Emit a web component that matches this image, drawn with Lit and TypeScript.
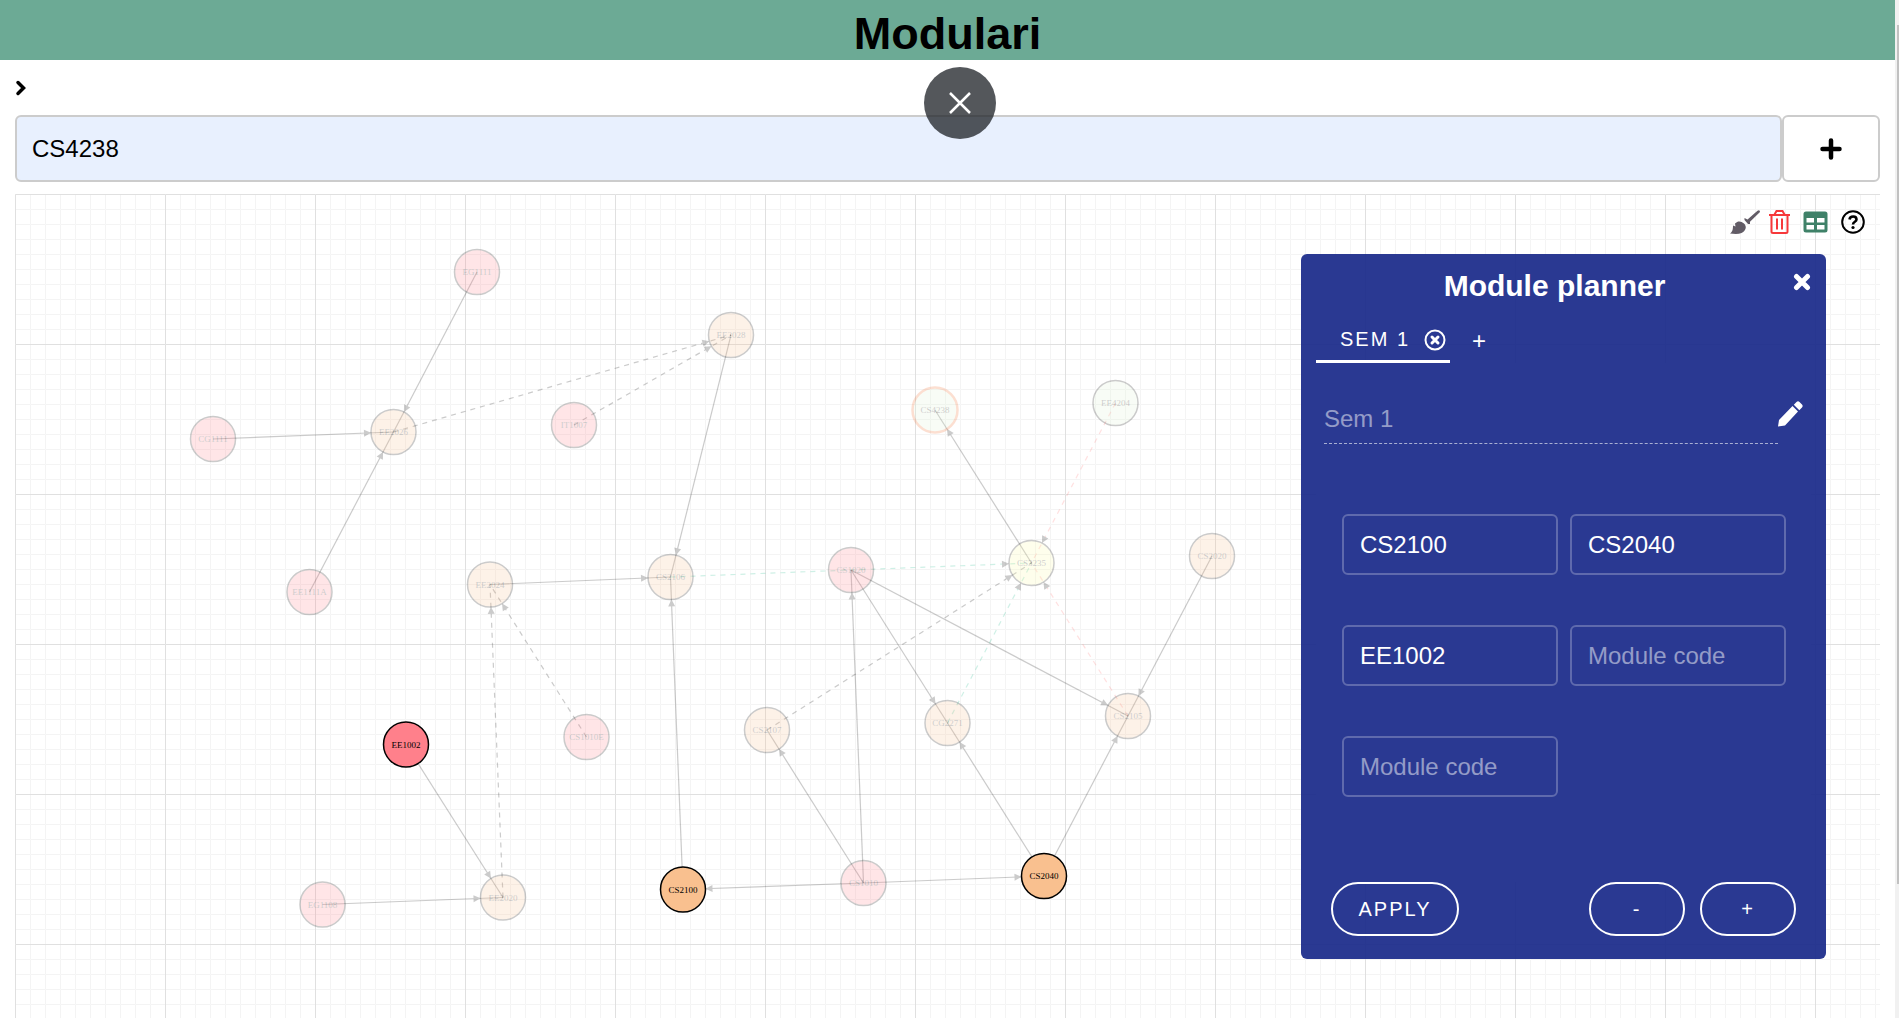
import { LitElement, html, svg, css } from "lit";
import { customElement, state } from "lit/decorators.js";

type Tone = "rose" | "peach" | "lemon" | "mint";
interface ModuleNode { id: string; x: number; y: number; tone: Tone; planned?: boolean; searched?: boolean }
interface Link { from: string; to: string; kind?: "dash" | "green" | "red" }

const NODES: ModuleNode[] = [
  { id: "EG1111", x: 477, y: 272, tone: "rose" },
  { id: "EE2028", x: 731, y: 335, tone: "peach" },
  { id: "CG1111", x: 213, y: 439, tone: "rose" },
  { id: "EE2026", x: 393.5, y: 432, tone: "peach" },
  { id: "IT1007", x: 574, y: 425, tone: "rose" },
  { id: "CS4238", x: 935, y: 410, tone: "mint", searched: true },
  { id: "EE4204", x: 1115.5, y: 403, tone: "mint" },
  { id: "EE1111A", x: 309.5, y: 592, tone: "rose" },
  { id: "EE2024", x: 490, y: 584.5, tone: "peach" },
  { id: "CS2106", x: 670.5, y: 577, tone: "peach" },
  { id: "CS1020", x: 851, y: 570, tone: "rose" },
  { id: "CS3235", x: 1031.5, y: 563, tone: "lemon" },
  { id: "CS2020", x: 1212, y: 556, tone: "peach" },
  { id: "EE1002", x: 406, y: 744.5, tone: "rose", planned: true },
  { id: "CS1010E", x: 586.5, y: 737, tone: "rose" },
  { id: "CS2107", x: 767, y: 730, tone: "peach" },
  { id: "CG2271", x: 947.5, y: 723, tone: "peach" },
  { id: "CS2105", x: 1128, y: 716, tone: "peach" },
  { id: "EG1108", x: 322.5, y: 904.5, tone: "rose" },
  { id: "EE2020", x: 503, y: 897.5, tone: "peach" },
  { id: "CS2100", x: 683, y: 889.5, tone: "peach", planned: true },
  { id: "CS1010", x: 863.5, y: 883, tone: "rose" },
  { id: "CS2040", x: 1044, y: 876, tone: "peach", planned: true },
];

const LINKS: Link[] = [
  { from: "EG1111", to: "EE2026" },
  { from: "CG1111", to: "EE2026" },
  { from: "EE1111A", to: "EE2026" },
  { from: "EE2026", to: "EE2028", kind: "dash" },
  { from: "IT1007", to: "EE2028", kind: "dash" },
  { from: "EE2028", to: "CS2106" },
  { from: "EE2024", to: "CS2106" },
  { from: "CS2100", to: "CS2106" },
  { from: "CS2106", to: "CS3235", kind: "green" },
  { from: "CS1010E", to: "EE2024", kind: "dash" },
  { from: "EE2020", to: "EE2024", kind: "dash" },
  { from: "EE1002", to: "EE2020" },
  { from: "EG1108", to: "EE2020" },
  { from: "CS1010", to: "CS2100" },
  { from: "CS1010", to: "CS2107" },
  { from: "CS1010", to: "CS1020" },
  { from: "CS1010", to: "CS2040" },
  { from: "CS1020", to: "CG2271" },
  { from: "CS1020", to: "CS2105" },
  { from: "CS2020", to: "CS2105" },
  { from: "CS2040", to: "CG2271" },
  { from: "CS2040", to: "CS2105" },
  { from: "CS3235", to: "CS4238" },
  { from: "CS2107", to: "CS3235", kind: "dash" },
  { from: "CG2271", to: "CS3235", kind: "green" },
  { from: "CS2105", to: "CS3235", kind: "red" },
  { from: "EE4204", to: "CS3235", kind: "red" },
];

const RADIUS = 22.5;

@customElement("module-graph")
export class ModuleGraph extends LitElement {
  static styles = css`
    :host { display: block; overflow: hidden; }
    .graph { display: block; width: 100%; height: 100%; }
    .minor { stroke: #f4f4f4; fill: none; }
    .major { stroke: #e0e0e0; fill: none; }
    .line { stroke: #000; stroke-width: 1.2; }
    .link { opacity: 0.2; }
    .dash, .green, .red { stroke-dasharray: 5 5; }
    .green { stroke: #12b886; }
    .red { stroke: #ff6b6b; }
    .node { opacity: 0.2; }
    .node.planned { opacity: 1; }
    .disc { stroke: #000; stroke-width: 1.5; }
    .rose { fill: #ff808b; }
    .peach { fill: #f9c08f; }
    .lemon { fill: #fdfba6; }
    .mint { fill: #e0f4d4; }
    .searched { stroke: #f2621f; stroke-width: 2.5; }
    .label { font: 9px "Liberation Serif", serif; text-anchor: middle; }
  `;

  private link(l: Link) {
    const a = NODES.find((n) => n.id === l.from)!;
    const b = NODES.find((n) => n.id === l.to)!;
    const dx = b.x - a.x;
    const dy = b.y - a.y;
    const len = Math.hypot(dx, dy);
    const angle = (Math.atan2(dy, dx) * 180) / Math.PI;
    return svg`<g class="link" transform="translate(${a.x} ${a.y}) rotate(${angle})">
      <line class="line ${l.kind ?? ""}" x1="0" y1="0" x2=${len} y2="0"></line>
      <path d="M${len - RADIUS} 0l-7 -3.5v7z"></path>
    </g>`;
  }

  private node(n: ModuleNode) {
    return svg`<g class="node ${n.planned ? "planned" : ""}">
      <circle class="disc ${n.tone} ${n.searched ? "searched" : ""}" cx=${n.x} cy=${n.y} r=${RADIUS}></circle>
      <text class="label" x=${n.x} y=${n.y + 3}>${n.id}</text>
    </g>`;
  }

  render() {
    return html`<svg class="graph" role="img" aria-label="Module prerequisites">
      <defs>
        <pattern id="small" width="15" height="15" patternUnits="userSpaceOnUse">
          <path class="minor" d="M0.5 15V0.5H15"></path>
        </pattern>
        <pattern id="large" width="150" height="150" patternUnits="userSpaceOnUse">
          <rect width="150" height="150" fill="url(#small)"></rect>
          <path class="major" d="M0.5 150V0.5H150"></path>
        </pattern>
      </defs>
      <rect width="100%" height="100%" fill="url(#large)"></rect>
      <g transform="translate(-15 -194)">
        <g>${LINKS.map((l) => this.link(l))}</g>
        <g>${NODES.map((n) => this.node(n))}</g>
      </g>
    </svg>`;
  }
}

@customElement("module-planner")
export class ModulePlanner extends LitElement {
  static styles = css`
    :host {
      display: flex; flex-direction: column; box-sizing: border-box;
      width: 525px; border-radius: 6px; padding: 13px 15px 23px;
      background: rgba(26, 42, 138, 0.93); color: #fff;
      font-family: "Liberation Sans", Arial, sans-serif;
    }
    button { font: inherit; letter-spacing: inherit; color: inherit; background: none; border: 0; padding: 0; cursor: pointer; }
    input { font: inherit; color: inherit; background: none; box-sizing: border-box; min-width: 0; outline: 0; }
    input::placeholder { color: rgba(255, 255, 255, 0.5); opacity: 1; }
    svg { display: block; fill: currentColor; }
    .head { display: grid; grid-template-columns: 1fr 18px; align-items: start; }
    .title { margin: 0; font-size: 30px; line-height: 38px; text-align: center; font-weight: 700; }
    .close { margin-top: 6px; }
    .tabs { display: flex; align-items: stretch; height: 50px; margin-top: 8px; }
    .tab { display: flex; align-items: center; gap: 14px; box-sizing: border-box; width: 134px; padding: 9px 0 3px 24px; border-bottom: 3px solid #fff; font-size: 20px; letter-spacing: 2px; white-space: nowrap; }
    .add { padding: 6px 22px 0; font-size: 24px; }
    .body { background: #2a3992; padding: 38px 0 85px; }
    .semester { display: flex; align-items: flex-start; padding: 0 8px; }
    .name { flex: 1; height: 43px; padding: 0 0 7px; border: 0; border-bottom: 1px dashed rgba(255, 255, 255, 0.6); font-size: 24px; }
    .slots { display: grid; grid-template-columns: 1fr 1fr; gap: 50px 12px; padding: 70px 25px 0 26px; }
    .slot { width: 100%; height: 61px; padding: 0 16px; border: 2px solid rgba(255, 255, 255, 0.25); border-radius: 6px; font-size: 24px; }
    .actions { display: flex; gap: 15px; padding: 0 15px; }
    .pill { width: 96px; height: 54px; border: 2px solid #fff; border-radius: 27px; font-size: 20px; letter-spacing: 2px; }
    .apply { width: 128px; margin-right: auto; }
  `;

  @state() private codes = ["CS2100", "CS2040", "EE1002", "", ""];

  render() {
    return html`
      <div class="head">
        <h2 class="title">Module planner</h2>
        <button class="close" aria-label="Close planner">
          <svg width="18" height="18" viewBox="0 0 18 18"><path d="M3.500 3.500l11 11M14.500 3.500L3.500 14.500" stroke="currentColor" stroke-width="5" stroke-linecap="round"></path></svg>
        </button>
      </div>
      <div class="tabs">
        <div class="tab">
          <button>SEM 1</button>
          <button aria-label="Remove semester">
            <svg width="22" height="22" viewBox="0 0 22 22" stroke="currentColor"><circle cx="11" cy="11" r="9.500" fill="none" stroke-width="2"></circle><path d="M8 8l6 6M14 8l-6 6" stroke-width="3" stroke-linecap="round"></path></svg>
          </button>
        </div>
        <button class="add" aria-label="Add semester">+</button>
      </div>
      <div class="body">
        <div class="semester">
          <input class="name" aria-label="Semester name" placeholder="Sem 1" />
          <button aria-label="Rename semester">
            <svg width="25" height="26" viewBox="0 0 25 26"><path d="M0 25.500L1 19L14.500 5L20 10.500L7 24.500zM15.800 3.800L18.500 1Q20 -.3 21.500 1L24 3.500Q25.300 5 24 6.500L21.300 9.300z"></path></svg>
          </button>
        </div>
        <div class="slots">
          ${this.codes.map((code, i) => html`<input class="slot" aria-label="Module ${i + 1}" placeholder="Module code" .value=${code} />`)}
        </div>
      </div>
      <div class="actions">
        <button class="pill apply">APPLY</button>
        <button class="pill" aria-label="Fewer modules">-</button>
        <button class="pill" aria-label="More modules">+</button>
      </div>
    `;
  }
}

@customElement("app-root")
export class AppRoot extends LitElement {
  static styles = css`
    :host {
      display: flex; height: 100vh; overflow: hidden; background: #fff; color: #000;
      font-family: "Liberation Sans", Arial, sans-serif;
    }
    button { font: inherit; color: inherit; background: none; border: 0; padding: 0; cursor: pointer; }
    svg { display: block; }
    .page { flex: 1; min-width: 0; display: flex; flex-direction: column; }
    .banner { height: 60px; background: #6caa95; text-align: center; }
    .brand { margin: 0; padding-top: 8px; font-size: 45px; line-height: 52px; font-weight: 700; }
    .content { flex: 1; min-height: 0; display: flex; flex-direction: column; padding: 0 15px; }
    .menu { align-self: flex-start; height: 55px; display: flex; align-items: center; }
    .search { display: flex; }
    .query { flex: 1; min-width: 0; box-sizing: border-box; height: 67px; padding: 0 15px; border: 2px solid #ccc; border-radius: 6px; background: #e8f0fe; font: 24px "Liberation Sans", Arial, sans-serif; color: #000; outline: 0; }
    .plus { box-sizing: border-box; width: 98px; border: 2px solid #ccc; border-radius: 6px; display: grid; place-items: center; }
    .board { flex: 1; min-height: 0; margin-top: 12px; display: grid; grid-template-columns: 1fr; grid-template-rows: 1fr; }
    .board > * { grid-area: 1 / 1; min-height: 0; }
    .side { display: flex; flex-direction: column; align-items: flex-end; justify-self: end; align-self: start; z-index: 1; }
    .tools { display: flex; align-items: center; gap: 13px; height: 24px; margin: 16px 15px 0; }
    .brush { width: 26px; }
    .brush svg { overflow: visible; }
    module-planner { margin: 20px 54px 0 0; }
    .exit { position: absolute; left: 924px; top: 67px; width: 72px; height: 72px; border-radius: 50%; background: rgba(32, 36, 41, 0.77); display: grid; place-items: center; z-index: 2; }
    .track { width: 4px; background: #f1f1f1; display: flex; flex-direction: column; align-items: flex-end; }
    .thumb { width: 2px; margin-top: 25px; height: 84.4%; background: #c1c1c1; }
  `;

  render() {
    return html`
      <div class="page">
        <header class="banner"><h1 class="brand">Modulari</h1></header>
        <main class="content">
          <button class="menu" aria-label="Open menu">
            <svg width="12" height="16" viewBox="0 0 12 16"><path d="M3 2.500L8.500 8L3 13.500" fill="none" stroke="#000" stroke-width="3.500" stroke-linecap="round"></path></svg>
          </button>
          <form class="search">
            <input class="query" aria-label="Module code" value="CS4238" />
            <button class="plus" type="button" aria-label="Add module">
              <svg width="22" height="22" viewBox="0 0 22 22"><path d="M11 2.500v17M2.500 11h17" stroke="#000" stroke-width="4.500" stroke-linecap="round"></path></svg>
            </button>
          </form>
          <section class="board">
            <module-graph></module-graph>
            <div class="side">
              <div class="tools">
                <button class="brush" aria-label="Clear highlights">
                  <svg width="30" height="24" viewBox="0 0 30 24" fill="#625c66"><path d="M0 23.500C3 21.500 3 18 3 15.500L5.500 16.500L5 13.500C8 10.500 11 11 14 13.500C17.500 17 15.500 21 11.500 23Q8 24.500 0 23.500z"></path><path d="M14.500 8L17.500 9.500L27.500 .8Q30 -.5 30 2L20 11.800L20 14L18 14L14.500 10z"></path></svg>
                </button>
                <button aria-label="Delete all">
                  <svg width="21" height="24" viewBox="0 0 21 24" fill="none" stroke="#f6383a" stroke-width="2"><path d="M0 5h21M2.500 5v16.500q0 1.500 1.500 1.500h13q1.500 0 1.500-1.500V5M5.500 4.500L7.500 1h6L15.500 4.500M8 8.500v11M13 8.500v11"></path></svg>
                </button>
                <button aria-label="Open planner">
                  <svg width="25" height="24" viewBox="0 0 25 24"><path fill="#3f8168" fill-rule="evenodd" d="M3 1.500h19q2.500 0 2.500 2.500v16q0 2.500-2.500 2.500H3Q.5 22.500 .5 20V4Q.5 1.500 3 1.500zM3.500 8v4.500h7.500V8zM14 8v4.500h7.500V8zM3.500 15v4.500h7.500V15zM14 15v4.500h7.500V15z"></path></svg>
                </button>
                <button aria-label="Help">
                  <svg width="24" height="24" viewBox="0 0 24 24" fill="none" stroke="#000"><circle cx="12" cy="12" r="10.800" stroke-width="2"></circle><path d="M8.500 9.500C9 5.500 15.500 5.500 15.500 9.500C15.500 12 12 11.500 12 14.500" stroke-width="2.600"></path><circle cx="12" cy="17.500" r="1.600" fill="#000" stroke="none"></circle></svg>
                </button>
              </div>
              <module-planner></module-planner>
            </div>
          </section>
        </main>
      </div>
      <div class="track" aria-hidden="true"><div class="thumb"></div></div>
      <button class="exit" aria-label="Exit full screen">
        <svg width="24" height="24" viewBox="0 0 24 24"><path d="M2 2l20 20M22 2L2 22" stroke="#fff" stroke-width="2.500"></path></svg>
      </button>
    `;
  }
}
